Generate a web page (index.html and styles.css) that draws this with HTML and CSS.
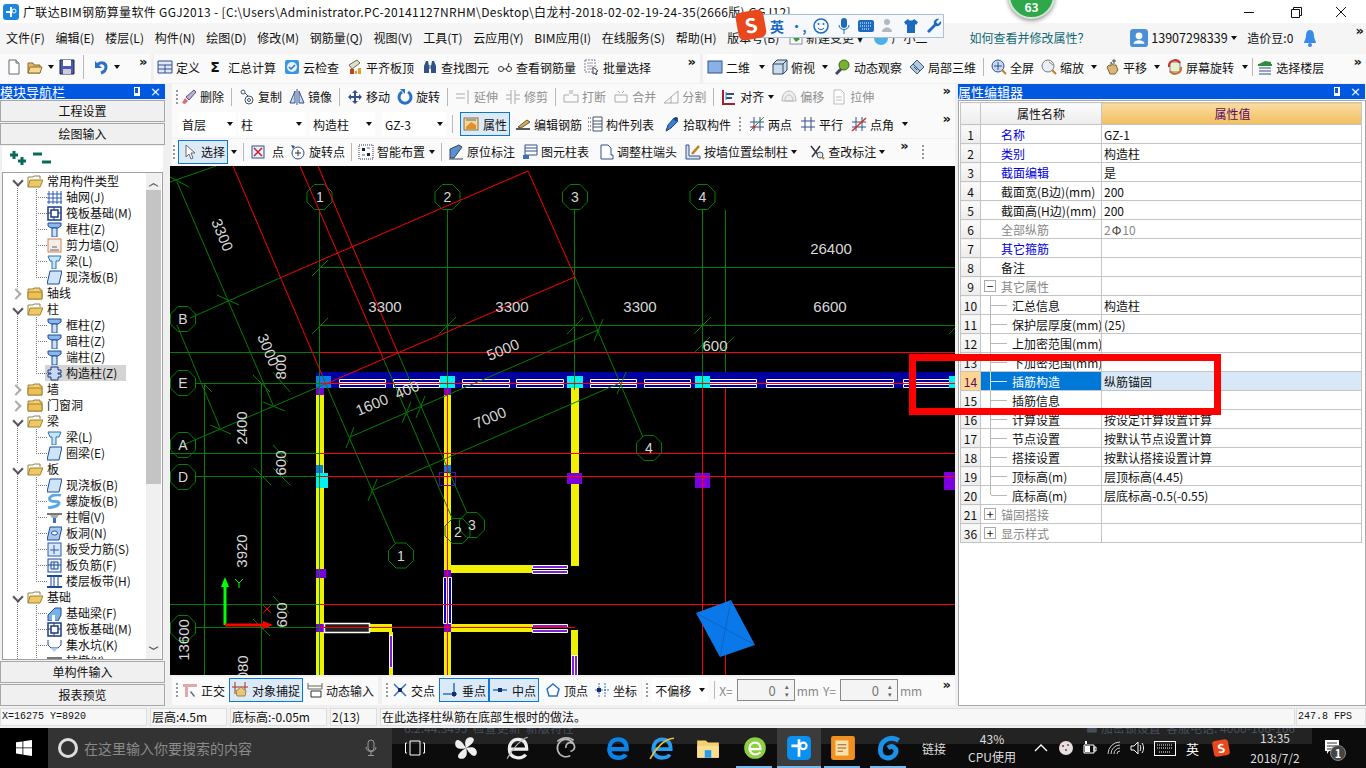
FILE: index.html
```html
<!DOCTYPE html>
<html lang="zh-CN">
<head>
<meta charset="utf-8">
<title>广联达BIM钢筋算量软件 GGJ2013</title>
<link rel="stylesheet" href="styles.css">
</head>
<body>
<svg class="sprite" aria-hidden="true">
<symbol id="new" viewBox="0 0 16 16"><path d="M3 1h7l3 3v11H3z" fill="#fff" stroke="#667"/><path d="M10 1v3h3" fill="#ddd" stroke="#667"/></symbol>
<symbol id="open" viewBox="0 0 16 16"><path d="M1 4h5l1 2h6v8H1z" fill="#e8b860" stroke="#8a6a30"/><path d="M3 8h12l-2 6H1z" fill="#f6d890" stroke="#8a6a30"/></symbol>
<symbol id="save" viewBox="0 0 16 16"><path d="M1 1h14v14H1z" fill="#4a5ab0" stroke="#223"/><path d="M4 1h8v6H4z" fill="#fff"/><path d="M4 10h8v5H4z" fill="#ccd"/></symbol>
<symbol id="undo" viewBox="0 0 16 16"><path d="M4 6c4-4 9-2 9 2 0 3-2 5-5 6" fill="none" stroke="#2a70c8" stroke-width="3"/><path d="M2 2v7h7z" fill="#2a70c8"/></symbol>
<symbol id="table" viewBox="0 0 16 16"><path d="M1 2h14v12H1z" fill="#dfe8f4" stroke="#34508a"/><path d="M1 6h14M1 10h14M8 6v8" stroke="#34508a" fill="none"/></symbol>
<symbol id="cloud" viewBox="0 0 16 16"><rect x="1" y="1" width="14" height="14" rx="2" fill="#3a96e0"/><circle cx="8" cy="8" r="5" fill="#e6f2fc"/><path d="M5 8l2 2 4-4" stroke="#2a70c8" stroke-width="1.5" fill="none"/></symbol>
<symbol id="align" viewBox="0 0 16 16"><path d="M2 6l8-5 3 3-8 6z" fill="#e0e0d0" stroke="#6a6a50"/><path d="M3 10h4v5H3z" fill="#c04020"/><path d="M8 12h2v3H8zM11 9h3v6h-3z" fill="#e0a030"/></symbol>
<symbol id="bino" viewBox="0 0 16 16"><path d="M2 7l2-5h2l1 5v7H2zM9 7l1-5h2l2 5v7H9z" fill="#34508a"/><path d="M7 6h2v4H7z" fill="#8aa"/></symbol>
<symbol id="glasses" viewBox="0 0 16 16"><circle cx="4" cy="10" r="2.5" fill="none" stroke="#333"/><circle cx="12" cy="10" r="2.5" fill="none" stroke="#333"/><path d="M6 10h3.500M11 8l1-4" stroke="#333" fill="none"/></symbol>
<symbol id="batch" viewBox="0 0 16 16"><path d="M1 1h10v12H1z" fill="#fff" stroke="#778" stroke-dasharray="2 1"/><path d="M3 4h6M3 7h6M3 10h6" stroke="#89a"/><path d="M9 8l5 4-2 1 1 2-1 1-1-2-2 1z" fill="#fff" stroke="#445"/></symbol>
<symbol id="box" viewBox="0 0 16 16"><rect x="1" y="2" width="14" height="12" fill="#8ab0e8" stroke="#34508a"/></symbol>
<symbol id="cube" viewBox="0 0 16 16"><path d="M1 5l4-4h10v10l-4 4H1z" fill="#c8dcf0" stroke="#345"/><path d="M1 5h10v10M11 5l4-4" fill="none" stroke="#345"/></symbol>
<symbol id="orbit" viewBox="0 0 16 16"><circle cx="9" cy="6" r="5" fill="#7ab030" stroke="#3a6a10"/><path d="M1 15l5-5" stroke="#446" stroke-width="3"/></symbol>
<symbol id="local" viewBox="0 0 16 16"><path d="M8 1l7 7-7 7-7-7z" fill="#b0c8e8" stroke="#456"/><path d="M4 5l7 7M8 1l3 3M5 8l3 3" stroke="#456" fill="none"/></symbol>
<symbol id="full" viewBox="0 0 16 16"><circle cx="7" cy="7" r="6" fill="#c8d8f0" stroke="#34508a"/><path d="M7 3v8M3 7h8" stroke="#34508a"/><path d="M11 11l4 4" stroke="#c08020" stroke-width="2"/></symbol>
<symbol id="zoom" viewBox="0 0 16 16"><circle cx="7" cy="7" r="6" fill="#e8eef8" stroke="#778"/><path d="M8 3l4 3" stroke="#c08020"/><path d="M11 11l4 4" stroke="#c08020" stroke-width="2"/></symbol>
<symbol id="pan" viewBox="0 0 16 16"><path d="M3 8l2-2 2 1V3l2 3 3 0 2 5-3 4H6z" fill="#d8b878" stroke="#806030"/><path d="M10 0v5M8 2h4" stroke="#446"/></symbol>
<symbol id="rotscr" viewBox="0 0 16 16"><rect x="3" y="3" width="10" height="10" fill="#e8f0d0" stroke="#789"/><path d="M2 8a6 6 0 0 1 11-4" fill="none" stroke="#d03020" stroke-width="2"/><path d="M14 8a6 6 0 0 1-11 4" fill="none" stroke="#d07020" stroke-width="2"/></symbol>
<symbol id="layers" viewBox="0 0 16 16"><path d="M2 5l6-3 6 1v2z" fill="#2a9040"/><path d="M2 9h12M2 12h12M2 15h12" stroke="#34508a" fill="none"/><path d="M1 6h14" stroke="#2a9040" stroke-width="2"/></symbol>
<symbol id="erase" viewBox="0 0 16 16"><path d="M1 14l3-5 3 3-3 3z" fill="#d07070"/><path d="M5 8l8-7 2 2-7 8z" fill="#c8a8e0" stroke="#556"/></symbol>
<symbol id="copy" viewBox="0 0 16 16"><circle cx="4" cy="3" r="2" fill="none" stroke="#456"/><circle cx="10" cy="11" r="4" fill="none" stroke="#456"/><circle cx="10" cy="11" r="1.500" fill="none" stroke="#456"/><path d="M6 4l3 3" stroke="#456"/></symbol>
<symbol id="mirror" viewBox="0 0 16 16"><path d="M6 2L1 14h5zM10 2l5 12h-5z" fill="#c8dcf0" stroke="#34508a"/><path d="M8 0v16" stroke="#34508a"/></symbol>
<symbol id="move" viewBox="0 0 16 16"><path d="M8 1l3 3H9v3h3V5l3 3-3 3V9H9v3h2l-3 3-3-3h2V9H4v2L1 8l3-3v2h3V4H5z" fill="#34508a"/></symbol>
<symbol id="rot" viewBox="0 0 16 16"><path d="M5 3a6 6 0 1 0 6 0" fill="none" stroke="#2a70c8" stroke-width="3"/><path d="M3 0h5v5z" fill="#2a70c8"/></symbol>
<symbol id="ext" viewBox="0 0 16 16"><path d="M1 5h9M1 9h9M13 1v14" stroke="#aaa" fill="none"/></symbol>
<symbol id="trim" viewBox="0 0 16 16"><path d="M1 6h5M10 6h5M1 10h5M10 10h5M6 1v14M10 1v14" stroke="#aaa" fill="none"/></symbol>
<symbol id="brk" viewBox="0 0 16 16"><path d="M1 6h5M1 13h14M1 13V6M15 13V6M10 6h5M7 1v4M9 1v4" stroke="#aaa" fill="none"/></symbol>
<symbol id="merge" viewBox="0 0 16 16"><path d="M2 6h12M2 13h12M2 13V6M14 13V6M5 2l2 2M11 2L9 4" stroke="#aaa" fill="none"/></symbol>
<symbol id="split" viewBox="0 0 16 16"><path d="M1 14l14-12v12zM8 14V8" stroke="#aaa" fill="none"/></symbol>
<symbol id="alignl" viewBox="0 0 16 16"><path d="M2 1v14h12" stroke="#a02030" fill="none" stroke-width="2"/><path d="M5 5h8M5 9h6" stroke="#34508a" stroke-width="2"/><path d="M5 3v8" stroke="#2a90c0"/></symbol>
<symbol id="offs" viewBox="0 0 16 16"><path d="M1 12c0-6 3-10 7-10s7 4 7 10zM4 12c0-4 2-6 4-6s4 2 4 6z" fill="#eee" stroke="#bbb"/></symbol>
<symbol id="str" viewBox="0 0 16 16"><path d="M3 1h7l3 3v11H3z" fill="#fff" stroke="#bbb"/><path d="M5 8h6M5 11h6" stroke="#bbb"/></symbol>
<symbol id="prop" viewBox="0 0 16 16"><rect x="1" y="2" width="14" height="12" fill="#f8d898" stroke="#8a7040"/><path d="M3 11l5-5 5 3v4H3z" fill="#e09030"/><path d="M3 4h10" stroke="#3a70b0"/></symbol>
<symbol id="edit" viewBox="0 0 16 16"><path d="M1 13h14" stroke="#222" stroke-width="1.500"/><path d="M3 11l9-7 3 2-9 6z" fill="#e0b040" stroke="#555"/></symbol>
<symbol id="list" viewBox="0 0 16 16"><path d="M1 2h3M1 6h3M1 10h3M1 14h3" stroke="#334" stroke-dasharray="1 1" fill="none"/><path d="M6 1h9v14H6zM6 5h9M6 8h9M6 11h9" fill="#fff" stroke="#456"/></symbol>
<symbol id="pick" viewBox="0 0 16 16"><path d="M2 15l2-6 6-7 4 3-7 7z" fill="#3a80d0" stroke="#1a4080"/><circle cx="12" cy="3" r="2" fill="#1a4080"/></symbol>
<symbol id="twop" viewBox="0 0 16 16"><path d="M5 1v14M11 1v14M1 6h14M1 11h14" stroke="#34508a" fill="none"/><path d="M1 15L15 1" stroke="#2a9040"/><circle cx="5" cy="11" r="1.500" fill="#d03020"/></symbol>
<symbol id="para" viewBox="0 0 16 16"><path d="M5 1v14M11 1v14M1 5h14M1 11h14" stroke="#34508a" fill="none"/></symbol>
<symbol id="pang" viewBox="0 0 16 16"><path d="M5 1v14M11 1v14M1 6h14M1 11h14" stroke="#34508a" fill="none"/><path d="M1 15L15 2" stroke="#d03020" stroke-width="1.500"/></symbol>
<symbol id="cursor" viewBox="0 0 16 16"><path d="M5 1v12l3-3 2 5 2-1-2-5h4z" fill="#fff" stroke="#667"/></symbol>
<symbol id="point" viewBox="0 0 16 16"><rect x="2" y="2" width="12" height="12" fill="#e8eef8" stroke="#34508a"/><path d="M4 4l8 8M12 4l-8 8" stroke="#c02030" stroke-width="1.500"/></symbol>
<symbol id="rotp" viewBox="0 0 16 16"><circle cx="8" cy="9" r="6" fill="none" stroke="#34508a"/><path d="M8 6v6M5 9h6" stroke="#333"/><path d="M1 1l4 1-2 3z" fill="#34508a"/></symbol>
<symbol id="smart" viewBox="0 0 16 16"><rect x="1" y="1" width="14" height="14" fill="#fff" stroke="#334" stroke-dasharray="1 1"/><path d="M4 4h3v3H4zM9 9h3v3H9z" fill="#223"/><path d="M9 4h3M4 11h3" stroke="#36c"/></symbol>
<symbol id="inpl" viewBox="0 0 16 16"><path d="M2 14V5l9-4 3 2-8 11z" fill="#5a90d0" stroke="#345"/><path d="M1 15h14" stroke="#345"/></symbol>
<symbol id="coltb" viewBox="0 0 16 16"><path d="M3 1h12v10H3z" fill="#fff" stroke="#34508a"/><path d="M3 4h12M3 7h12" stroke="#34508a"/><path d="M1 11h6v4H1z" fill="#3a70c0"/></symbol>
<symbol id="adj" viewBox="0 0 16 16"><path d="M3 1h7l3 3v7h2v4H3z" fill="#fff" stroke="#34508a"/></symbol>
<symbol id="wallp" viewBox="0 0 16 16"><path d="M1 15V1h3v11h11v3z" fill="#d8e4f4" stroke="#34508a"/><path d="M7 10l7-8" stroke="#c08020" stroke-width="2.500"/></symbol>
<symbol id="chk" viewBox="0 0 16 16"><path d="M2 2l8 10M11 2L3 13" stroke="#334" fill="none" stroke-width="1.500"/><circle cx="11" cy="11" r="3" fill="#e0e8f0" stroke="#456"/><path d="M13 13l2 2" stroke="#c08020" stroke-width="2"/></symbol>
<symbol id="ortho" viewBox="0 0 16 16"><path d="M1 2h14v3H6v10H3V5H1z" fill="#e0a8a8"/><path d="M9 9l4 5-1 1-4-5z" fill="#567"/></symbol>
<symbol id="snap" viewBox="0 0 16 16"><path d="M3 0v12M13 0v12" stroke="#a03020"/><path d="M0 5h16" stroke="#a03020"/><path d="M4 9l5-4 5 4-1 5H5z" fill="#e8c878" stroke="#a08040"/></symbol>
<symbol id="dyn" viewBox="0 0 16 16"><path d="M1 1v6h14V1M1 4h14" stroke="#666" fill="none"/><path d="M4 9h10v6H4z" fill="#fff" stroke="#333"/></symbol>
<symbol id="cross" viewBox="0 0 16 16"><path d="M2 2l12 12M14 2L2 14" stroke="#2a70c8" stroke-width="1.500"/><rect x="6" y="6" width="4" height="4" fill="#1a2a70"/></symbol>
<symbol id="perp" viewBox="0 0 16 16"><path d="M1 12h14M12 1v14" stroke="#2a70c8" stroke-width="1.500"/><rect x="10" y="10" width="4" height="4" fill="#1a2a70"/></symbol>
<symbol id="mid" viewBox="0 0 16 16"><path d="M1 8h14" stroke="#2a70c8" stroke-width="1.500"/><rect x="6" y="6" width="4" height="4" fill="#1a2a70"/></symbol>
<symbol id="vert" viewBox="0 0 16 16"><path d="M8 2l6 5-2 7H4L2 7z" fill="#fff" stroke="#2a70c8" stroke-width="1.500"/></symbol>
<symbol id="coord" viewBox="0 0 16 16"><path d="M5 1v14M11 1v14M1 8h14" stroke="#2a70c8" stroke-dasharray="2 1" fill="none"/><rect x="3" y="6" width="4" height="4" fill="#1a2a70"/></symbol>
<symbol id="tgrid" viewBox="0 0 15 15"><path d="M2 1v13M6 1v13M10 1v13M14 1v13M0 4h15M0 8h15M0 12h15" stroke="#2a5ab0" fill="none"/></symbol>
<symbol id="traft" viewBox="0 0 15 15"><path d="M1 1h13v13H1zM4 4h7v7H4z" fill="#fff" stroke="#1a3a80" stroke-width="1.500"/><path d="M1 7h3M11 7h3M7 1v3M7 11v3" stroke="#1a3a80"/></symbol>
<symbol id="tcol" viewBox="0 0 15 15"><path d="M1 1h13v3l-3 2H4L1 4z" fill="#8ab8e8" stroke="#1a4a9a"/><path d="M5 6h5v9H5z" fill="#c8e0f8" stroke="#1a4a9a"/></symbol>
<symbol id="twall" viewBox="0 0 15 15"><rect x="1" y="1" width="13" height="13" fill="#f4eeea" stroke="#d08050"/><path d="M3 11h9v2H3zM5 8h5v2H5z" fill="#aaa"/></symbol>
<symbol id="tbeam" viewBox="0 0 15 15"><path d="M1 2h13l-2 5H9v8H5V7H3z" fill="#c8e4f8" stroke="#2a70b8"/></symbol>
<symbol id="tslab" viewBox="0 0 15 15"><path d="M3 1h12l-3 13H0z" fill="#d0e4f8" stroke="#1a4a9a"/></symbol>
<symbol id="tcon" viewBox="0 0 15 15"><path d="M4 1h7v3h3v3h-3v1h3v3h-3v3H4v-3H1V8h3V7H1V4h3z" fill="#c8d8f0" stroke="#1a3a80"/></symbol>
<symbol id="tspi" viewBox="0 0 15 15"><path d="M14 1C6 0 1 3 3 6s9 0 9 3-6 4-11 5" fill="none" stroke="#5aa8e8" stroke-width="3"/></symbol>
<symbol id="tcap" viewBox="0 0 15 15"><path d="M0 3h15v2H0z" fill="#777"/><path d="M3 5h9l-2 3H5z" fill="#aaa"/><path d="M6 8h3v5H6z" fill="#3a70c0"/></symbol>
<symbol id="thol" viewBox="0 0 15 15"><path d="M3 1h12l-3 13H0z" fill="#a8c8f0" stroke="#1a4a9a"/><ellipse cx="7.500" cy="7" rx="3" ry="2" fill="#fff" stroke="#1a4a9a"/></symbol>
<symbol id="tfor" viewBox="0 0 15 15"><rect x="1" y="1" width="13" height="13" fill="#d8e8f8" stroke="#2a5ab0"/><path d="M7 3v9M3 8h9" stroke="#2a5ab0"/></symbol>
<symbol id="tneg" viewBox="0 0 15 15"><rect x="1" y="1" width="13" height="13" fill="#e8f0fa" stroke="#1a4a9a"/><path d="M1 7h13M7 4v7M4 4h7v7H4z" fill="none" stroke="#1a4a9a"/></symbol>
<symbol id="tban" viewBox="0 0 15 15"><path d="M0 2h15M0 13h15" stroke="#1a4a9a" stroke-width="2"/><path d="M4 3v9M7 3v9M11 3v9" stroke="#1a4a9a"/></symbol>
<symbol id="tfnd" viewBox="0 0 15 15"><path d="M1 15V9l7-7h6v7l-3 6z" fill="#7ab0e8" stroke="#1a4a9a"/><path d="M5 15V9h3v6z" fill="#fff"/></symbol>
<symbol id="tpit" viewBox="0 0 15 15"><path d="M1 2v5l3 3h7l3-3V2" fill="none" stroke="#1a4a9a"/><path d="M4 10l3 4 4-4z" fill="#a8c8f0"/></symbol>
<symbol id="fold" viewBox="0 0 16 14"><path d="M1 3h5l1-1h6v2h2v9H1z" fill="#f4d070" stroke="#9a8040"/><path d="M1 6h14v7H1z" fill="#f0c050" stroke="#9a8040"/></symbol>
<symbol id="fopen" viewBox="0 0 16 14"><path d="M1 13V3h5l1-1h6v3" fill="#fff" stroke="#9a8040"/><path d="M3 6h13l-3 7H1z" fill="#f0c860" stroke="#9a8040"/></symbol>
<symbol id="win" viewBox="0 0 16 16"><path d="M0 2.300L6.500 1.400V7.500H0zM7.300 1.300L16 0V7.500H7.300zM0 8.300H6.500V14.500L0 13.600zM7.300 8.300H16V16L7.300 14.700z" fill="#fff"/></symbol>
</svg>

<div class="app">
  <header class="titlebar">
    <svg class="app-icon" viewBox="0 0 16 16"><rect width="16" height="16" rx="3" fill="#1a86e0"/><path d="M8 3v10M3 8h4" stroke="#fff" stroke-width="2" fill="none"/><circle cx="11" cy="7" r="2" fill="none" stroke="#fff"/></svg>
    <span class="title-text">广联达BIM钢筋算量软件 GGJ2013 - [C:\Users\Administrator.PC-20141127NRHM\Desktop\白龙村-2018-02-02-19-24-35(2666版).GGJ12]</span>
    <div class="win-controls">
      <svg viewBox="0 0 46 22"><path d="M18 11.500h10" stroke="#111"/></svg>
      <svg viewBox="0 0 46 22"><path d="M19.500 8.500h8v8h-8zM21.500 8.500v-2h8v8h-2" fill="none" stroke="#111"/></svg>
      <svg viewBox="0 0 46 22"><path d="M18 6l10 10M28 6L18 16" stroke="#111"/></svg>
    </div>
  </header>

  <nav class="menubar">
    <span>文件(F)</span><span>编辑(E)</span><span>楼层(L)</span><span>构件(N)</span><span>绘图(D)</span><span>修改(M)</span><span>钢筋量(Q)</span><span>视图(V)</span><span>工具(T)</span><span>云应用(Y)</span><span>BIM应用(I)</span><span>在线服务(S)</span><span>帮助(H)</span><span>版本号(B)</span>
    <span class="menu-extra"><svg class="ic" viewBox="0 0 16 16"><rect x="2" y="2" width="12" height="12" fill="#fff" stroke="#88a"/><path d="M8 5l4 4-4 3-3-4z" fill="#3a9a30"/></svg>新建变更 ▾</span>
    <span class="menu-extra2"><svg class="ic" viewBox="0 0 16 16"><circle cx="8" cy="8" r="7" fill="#4ab0e8"/></svg>广小二</span>
    <span class="help-link">如何查看并修改属性？</span>
    <span class="account"><svg class="ic-lg" viewBox="0 0 16 16"><rect width="16" height="16" rx="3" fill="#4a90d8"/><circle cx="8" cy="6" r="3" fill="#fff"/><path d="M3 13c1-4 9-4 10 0z" fill="#fff"/></svg>13907298339<i class="caret"></i></span>
    <span class="beans">造价豆:0</span>
    <svg class="bell" viewBox="0 0 14 18"><path d="M7 1c3 0 4 3 4 6 0 3 2 5 2 7H1c0-2 2-4 2-7 0-3 1-6 4-6z" fill="#3a8ae8"/><circle cx="7" cy="16" r="2" fill="#3a8ae8"/></svg>
    <span class="chev menu-chev">»</span>
  </nav>

  <div class="toolbar top-tools">
    <div class="tgroup file-tools">
      <svg class="ic"><use href="#new"/></svg><svg class="ic"><use href="#open"/></svg><i class="caret"></i><svg class="ic"><use href="#save"/></svg><b class="sep"></b><svg class="ic"><use href="#undo"/></svg><i class="caret"></i><span class="chev">»</span>
    </div>
    <div class="tgroup main-tools">
      <span class="ti"><svg class="ic"><use href="#table"/></svg>定义</span>
      <span class="ti"><b class="sigma">Σ</b>汇总计算</span>
      <span class="ti"><svg class="ic"><use href="#cloud"/></svg>云检查</span>
      <span class="ti"><svg class="ic"><use href="#align"/></svg>平齐板顶</span>
      <span class="ti"><svg class="ic"><use href="#bino"/></svg>查找图元</span>
      <span class="ti"><svg class="ic"><use href="#glasses"/></svg>查看钢筋量</span>
      <span class="ti"><svg class="ic"><use href="#batch"/></svg>批量选择</span>
      <span class="chev push">»</span>
    </div>
    <div class="tgroup view-tools">
      <span class="ti ti-white"><svg class="ic"><use href="#box"/></svg>二维</span><i class="caret caret-b"></i>
      <span class="ti"><svg class="ic"><use href="#cube"/></svg>俯视</span><i class="caret"></i>
      <span class="ti"><svg class="ic"><use href="#orbit"/></svg>动态观察</span>
      <span class="ti"><svg class="ic"><use href="#local"/></svg>局部三维</span>
      <b class="sep"></b>
      <span class="ti"><svg class="ic"><use href="#full"/></svg>全屏</span>
      <span class="ti"><svg class="ic"><use href="#zoom"/></svg>缩放</span><i class="caret"></i>
      <span class="ti"><svg class="ic"><use href="#pan"/></svg>平移</span><i class="caret"></i>
      <span class="ti"><svg class="ic"><use href="#rotscr"/></svg>屏幕旋转</span><i class="caret caret-n"></i>
      <b class="sep sep-tight"></b>
      <span class="ti"><svg class="ic"><use href="#layers"/></svg>选择楼层</span>
      <span class="chev push">»</span>
    </div>
  </div>

  <main class="workspace">
    <aside class="nav-panel">
      <div class="panel-title"><span>模块导航栏</span><span class="pin-close"><i class="pin"></i><i class="close">×</i></span></div>
      <div class="nav-btn">工程设置</div>
      <div class="nav-btn">绘图输入</div>
      <div class="tree-head"><svg viewBox="0 0 44 18"><path d="M5 1v8M1 5h8M13 7v8M9 11h8M24 4h9M33 12h9" stroke="#0a6a5a" stroke-width="3" fill="none"/></svg></div>
      <div class="tree-box">
        <ul class="tree">
          <li class="root open"><svg class="fd"><use href="#fopen"/></svg>常用构件类型</li>
          <li class="leaf"><svg class="ti-ic"><use href="#tgrid"/></svg>轴网(J)</li>
          <li class="leaf"><svg class="ti-ic"><use href="#traft"/></svg>筏板基础(M)</li>
          <li class="leaf"><svg class="ti-ic"><use href="#tcol"/></svg>框柱(Z)</li>
          <li class="leaf"><svg class="ti-ic"><use href="#twall"/></svg>剪力墙(Q)</li>
          <li class="leaf"><svg class="ti-ic"><use href="#tbeam"/></svg>梁(L)</li>
          <li class="leaf last"><svg class="ti-ic"><use href="#tslab"/></svg>现浇板(B)</li>
          <li class="root shut"><svg class="fd"><use href="#fold"/></svg>轴线</li>
          <li class="root open"><svg class="fd"><use href="#fopen"/></svg>柱</li>
          <li class="leaf"><svg class="ti-ic"><use href="#tcol"/></svg>框柱(Z)</li>
          <li class="leaf"><svg class="ti-ic"><use href="#tcol"/></svg>暗柱(Z)</li>
          <li class="leaf"><svg class="ti-ic"><use href="#tcol"/></svg>端柱(Z)</li>
          <li class="leaf last sel"><svg class="ti-ic"><use href="#tcon"/></svg>构造柱(Z)</li>
          <li class="root shut"><svg class="fd"><use href="#fold"/></svg>墙</li>
          <li class="root shut"><svg class="fd"><use href="#fold"/></svg>门窗洞</li>
          <li class="root open"><svg class="fd"><use href="#fopen"/></svg>梁</li>
          <li class="leaf"><svg class="ti-ic"><use href="#tbeam"/></svg>梁(L)</li>
          <li class="leaf last"><svg class="ti-ic"><use href="#tslab"/></svg>圈梁(E)</li>
          <li class="root open"><svg class="fd"><use href="#fopen"/></svg>板</li>
          <li class="leaf"><svg class="ti-ic"><use href="#tslab"/></svg>现浇板(B)</li>
          <li class="leaf"><svg class="ti-ic"><use href="#tspi"/></svg>螺旋板(B)</li>
          <li class="leaf"><svg class="ti-ic"><use href="#tcap"/></svg>柱帽(V)</li>
          <li class="leaf"><svg class="ti-ic"><use href="#thol"/></svg>板洞(N)</li>
          <li class="leaf"><svg class="ti-ic"><use href="#tfor"/></svg>板受力筋(S)</li>
          <li class="leaf"><svg class="ti-ic"><use href="#tneg"/></svg>板负筋(F)</li>
          <li class="leaf last"><svg class="ti-ic"><use href="#tban"/></svg>楼层板带(H)</li>
          <li class="root open"><svg class="fd"><use href="#fopen"/></svg>基础</li>
          <li class="leaf"><svg class="ti-ic"><use href="#tfnd"/></svg>基础梁(F)</li>
          <li class="leaf"><svg class="ti-ic"><use href="#traft"/></svg>筏板基础(M)</li>
          <li class="leaf"><svg class="ti-ic"><use href="#tpit"/></svg>集水坑(K)</li>
          <li class="leaf"><svg class="ti-ic"><use href="#tcap"/></svg>柱墩(Y)</li>
        </ul>
        <div class="scroll"><span class="sc-up">︿</span><span class="sc-thumb"></span><span class="sc-track"></span><span class="sc-dn">﹀</span></div>
      </div>
      <div class="nav-btn">单构件输入</div>
      <div class="nav-btn">报表预览</div>
    </aside>

    <section class="center">
      <div class="toolbar draw-row row-edit">
        <i class="grip"></i>
        <span class="ti"><svg class="ic"><use href="#erase"/></svg>删除</span><b class="sep"></b>
        <span class="ti"><svg class="ic"><use href="#copy"/></svg>复制</span>
        <span class="ti"><svg class="ic"><use href="#mirror"/></svg>镜像</span><b class="sep"></b>
        <span class="ti"><svg class="ic"><use href="#move"/></svg>移动</span>
        <span class="ti"><svg class="ic"><use href="#rot"/></svg>旋转</span><b class="sep"></b>
        <span class="ti off"><svg class="ic"><use href="#ext"/></svg>延伸</span>
        <span class="ti off"><svg class="ic"><use href="#trim"/></svg>修剪</span><b class="sep"></b>
        <span class="ti off"><svg class="ic"><use href="#brk"/></svg>打断</span>
        <span class="ti off"><svg class="ic"><use href="#merge"/></svg>合并</span>
        <span class="ti off"><svg class="ic"><use href="#split"/></svg>分割</span><b class="sep"></b>
        <span class="ti"><svg class="ic"><use href="#alignl"/></svg>对齐<i class="caret caret-n"></i></span>
        <span class="ti off"><svg class="ic"><use href="#offs"/></svg>偏移</span>
        <span class="ti off"><svg class="ic"><use href="#str"/></svg>拉伸</span>
        <span class="chev push">»</span>
      </div>
      <div class="toolbar draw-row row-select">
        <span class="combo c-floor">首层<i class="caret"></i></span>
        <span class="combo c-type">柱<i class="caret"></i></span>
        <span class="combo c-sub">构造柱<i class="caret"></i></span>
        <span class="combo c-name">GZ-3<i class="caret"></i></span>
        <b class="sep"></b>
        <span class="ti active"><svg class="ic"><use href="#prop"/></svg>属性</span>
        <span class="ti"><svg class="ic"><use href="#edit"/></svg>编辑钢筋</span>
        <span class="ti"><svg class="ic"><use href="#list"/></svg>构件列表</span>
        <span class="ti ml5"><svg class="ic"><use href="#pick"/></svg>拾取构件</span>
        <i class="grip"></i>
        <span class="ti"><svg class="ic"><use href="#twop"/></svg>两点</span>
        <span class="ti ml3"><svg class="ic"><use href="#para"/></svg>平行</span>
        <span class="ti ml3"><svg class="ic"><use href="#pang"/></svg>点角</span><i class="caret caret-w"></i>
        <span class="chev push">»</span>
      </div>
      <div class="toolbar draw-row row-draw">
        <i class="grip"></i>
        <span class="ti active"><svg class="ic"><use href="#cursor"/></svg>选择</span><i class="caret caret-n"></i><b class="sep"></b>
        <span class="ti ti-point"><svg class="ic"><use href="#point"/></svg>点</span>
        <span class="ti"><svg class="ic"><use href="#rotp"/></svg>旋转点</span><b class="sep"></b>
        <span class="ti"><svg class="ic"><use href="#smart"/></svg>智能布置<i class="caret caret-n"></i></span><b class="sep"></b>
        <span class="ti"><svg class="ic"><use href="#inpl"/></svg>原位标注</span>
        <span class="ti ml2"><svg class="ic"><use href="#coltb"/></svg>图元柱表</span>
        <span class="ti ml4"><svg class="ic"><use href="#adj"/></svg>调整柱端头</span>
        <span class="ti ml3"><svg class="ic"><use href="#wallp"/></svg>按墙位置绘制柱<i class="caret"></i></span>
        <span class="ti ml7"><svg class="ic"><use href="#chk"/></svg>查改标注<i class="caret"></i></span>
        <span class="chev">»</span>
        <i class="grip"></i>
      </div>

      <svg class="canvas" viewBox="170 166 785 509">
        <defs><path id="oc" d="M5-12.500L12.500-5V5L5 12.500H-5L-12.500 5V-5L-5-12.500z"/></defs>
        <rect x="170" y="166" width="785" height="509" fill="#000"/>
        <!-- walls -->
        <path class="wall" d="M316 390h8v285h-8zM444 390h7v285h-7zM571 388h8v178h-8zM451 565h81v8h-81zM451 624h81v8h-81zM324 624h68v8h-68zM389 632h4v43h-4zM571 630h7v45h-7z"/>
        <rect x="316" y="372" width="639" height="16" fill="#0000a0"/>
        <path class="rebar" d="M339.500 379.500h46v3h-46zM339.500 384.500h46v3h-46zM393.500 379.500h46v3h-46zM393.500 384.500h46v3h-46zM462.500 379.500h47v3h-47zM462.500 384.500h47v3h-47zM516.500 379.500h47v3h-47zM516.500 384.500h47v3h-47zM590.500 379.500h46v3h-46zM590.500 384.500h46v3h-46zM644.500 379.500h46v3h-46zM644.500 384.500h46v3h-46zM709.500 379.500h47v3h-47zM709.500 384.500h47v3h-47zM766.500 379.500h127v3h-127zM766.500 384.500h127v3h-127zM903.500 379.500h46v3h-46zM903.500 384.500h46v3h-46z"/>
        <path fill="#00f0f0" d="M440 376h15v12h-15zM567 376h16v12h-16zM695 376h15v12h-15zM949 376h6v12h-6zM316 473h12v15h-12z"/>
        <path fill="#0a7cf0" d="M316 376h15v12h-15zM316 465h7v8h-7zM444 465h7v8h-7z"/>
        <path fill="#7a00e0" d="M316 388h8v7h-8zM444 388h7v7h-7zM316 569h10v9h-10zM444 570h7v7h-7zM316 624h8v8h-8zM444 624h7v8h-7zM567 473h15v11h-15zM695 473h15v15h-15zM944 472h11v18h-11z"/>
        <rect x="439.500" y="472.500" width="16" height="13" fill="none" stroke="#5a00c0"/>
        <path d="M324.500 623.500h45v9h-45z" fill="#222" stroke="#fff" stroke-width="1.500"/>
        <path d="M443.500 577.500h3v46h-3zM448.500 577.500h3v46h-3z" fill="#0000d0" stroke="#fff"/>
        <path d="M532.500 565.500h35v3h-35zM532.500 570.500h35v3h-35zM532.500 624.500h35v3h-35zM532.500 629.500h35v3h-35zM389.500 635.500h3v32h-3zM571.500 655.500h3v20h-3zM574.500 655.500h3v20h-3z" fill="#8020d0" stroke="#fff"/>
        <!-- green lines -->
        <path class="gl" d="M319.500 209V675M447.500 210V390M574.500 210V390M702.500 210V390M725.500 210V372M204.500 383V675M261.500 383V675M320 267.500H955M320 325.500H955M170 352.500H320M195 383.500H320M170 453.500H320M195 476.500H320M170 604.500H320M195 627.500H320"/>
        <path class="gl" d="M183 445L323 385M190 318L282 277M350 437L598 330M373 490L620 383M170 182L216 166M177 182L273 405M177 325L220 428M322 375L395 543M383 358L452 518M398 353L467 513M575 277L643 437"/>
        <path class="gl" d="M312 276L328 260M312 334L328 318M439 334L456 317M567 334L583 318M694 334L711 317M694 353L710 337M718 353L734 337M949 334L955 328M253 375L270 392M273 372L290 392M203 383L212 392M254 468L271 485M273 468L290 485M273 596L289 613M253 619L270 636M273 445L288 462M217 295L239 305M263 402L285 411M210 425L231 434M346 448L354 427M402 423L411 402M416 418L425 396M170 177L189 187M594 341L603 319M617 394L626 372M368 501L377 479"/>
        <g class="oct">
          <use href="#oc" x="319.500" y="197"/><use href="#oc" x="447.500" y="197"/><use href="#oc" x="575" y="197"/><use href="#oc" x="702.500" y="197"/>
          <use href="#oc" x="183" y="319"/><use href="#oc" x="183" y="383"/><use href="#oc" x="183" y="445"/><use href="#oc" x="183" y="477"/><use href="#oc" x="183" y="628"/>
          <use href="#oc" x="649" y="448"/><use href="#oc" x="401" y="555.500"/><use href="#oc" x="457.500" y="531"/><use href="#oc" x="472" y="525"/>
        </g>
        <!-- red lines -->
        <path class="rl" d="M320 352.500H955M320 383.500H955M320 453.500H955M320 476.500H955M320 604.500H955M320 627.500H575M447.500 390V675M702.500 388V675M725.500 388V675"/>
        <path class="rl" d="M233 166L322 375M300 166L383 358M318 166L398 353M282 277L528 171M323 385L575 277M528 171L575 277"/>
        <!-- axes -->
        <path d="M225 625V586" stroke="#00ff00" stroke-width="3"/><path d="M225 577l-4 10h8z" fill="#00ff00"/>
        <path d="M225 625H265" stroke="#ff0000" stroke-width="3"/><path d="M273 625l-10-4v8z" fill="#ff0000"/>
        <path d="M235 579l4 4 4-4M239 583v5" stroke="#00ff00" fill="none"/>
        <path d="M263 605l8 8M271 605l-8 8" stroke="#ff0000" fill="none"/>
        <!-- blue square -->
        <path d="M731 600L755 645 720 657 696 613z" fill="#0a78e8"/>
        <path d="M731 600L720 657M696 613L755 645" stroke="#0a50a0" stroke-width=".5" fill="none"/>
        <!-- labels -->
        <g class="lab">
          <text x="320" y="202" class="cn">1</text><text x="447.500" y="202" class="cn">2</text><text x="575" y="202" class="cn">3</text><text x="702.500" y="202" class="cn">4</text>
          <text x="183" y="324" class="cn">B</text><text x="183" y="388" class="cn">E</text><text x="183" y="450" class="cn">A</text><text x="183" y="482" class="cn">D</text>
          <text x="649" y="453" class="cn">4</text><text x="401" y="561" class="cn">1</text><text x="458" y="537" class="cn">2</text><text x="472" y="530" class="cn">3</text>
          <text x="385" y="312">3300</text><text x="512" y="312">3300</text><text x="640" y="312">3300</text><text x="830" y="312">6600</text><text x="831" y="254">26400</text>
          <text x="715" y="351">600</text>
          <text transform="translate(222 235) rotate(67)" y="5">3300</text>
          <text transform="translate(268 350) rotate(67)" y="5">3000</text>
          <text transform="translate(503 350) rotate(-23)" y="5">5000</text>
          <text transform="translate(372 405) rotate(-23)" y="5">1600</text>
          <text transform="translate(407 390) rotate(-23)" y="5">400</text>
          <text transform="translate(490 418) rotate(-23)" y="5">7000</text>
          <text transform="translate(281 367) rotate(-90)" y="5">800</text>
          <text transform="translate(242 428) rotate(-90)" y="5">2400</text>
          <text transform="translate(281 463) rotate(-90)" y="5">600</text>
          <text transform="translate(242 551) rotate(-90)" y="5">3920</text>
          <text transform="translate(282 615) rotate(-90)" y="5">600</text>
          <text transform="translate(184 640) rotate(-90)" y="5">13600</text>
          <text transform="translate(243 672) rotate(-90)" y="5">3080</text>
        </g>
      </svg>

      <div class="toolbar draw-row row-snap">
        <i class="grip"></i>
        <span class="ti"><svg class="ic"><use href="#ortho"/></svg>正交</span>
        <span class="ti active"><svg class="ic"><use href="#snap"/></svg>对象捕捉</span>
        <span class="ti"><svg class="ic"><use href="#dyn"/></svg>动态输入</span>
        <b class="tgap"></b><i class="grip"></i>
        <span class="ti"><svg class="ic"><use href="#cross"/></svg>交点</span>
        <span class="ti active"><svg class="ic"><use href="#perp"/></svg>垂点</span>
        <span class="ti active ti-join"><svg class="ic"><use href="#mid"/></svg>中点</span>
        <span class="ti ml2"><svg class="ic"><use href="#vert"/></svg>顶点</span>
        <span class="ti ml2"><svg class="ic"><use href="#coord"/></svg>坐标</span>
        <b class="tgap tgap-sm"></b><i class="grip"></i>
        <span class="combo c-off">不偏移<i class="caret"></i></span><b class="sep"></b>
        <span class="mute">X=</span><span class="spin">0<i class="spin-arrows">▴<br>▾</i></span><span class="mute mm">mm</span>
        <span class="mute">Y=</span><span class="spin">0<i class="spin-arrows">▴<br>▾</i></span><span class="mute mm">mm</span>
        <span class="chev push">»</span>
      </div>
    </section>

    <aside class="prop-panel">
      <div class="panel-title"><span>属性编辑器</span><span class="pin-close"><i class="pin"></i><i class="close">×</i></span></div>
      <div class="prop-body">
        <table class="grid">
          <thead><tr><th class="n"></th><th class="k">属性名称</th><th class="v">属性值</th></tr></thead>
          <tbody>
            <tr><td class="n">1</td><td class="k link">名称</td><td class="v">GZ-1</td></tr>
            <tr><td class="n">2</td><td class="k link">类别</td><td class="v">构造柱</td></tr>
            <tr><td class="n">3</td><td class="k link">截面编辑</td><td class="v">是</td></tr>
            <tr><td class="n">4</td><td class="k">截面宽(B边)(mm)</td><td class="v">200</td></tr>
            <tr><td class="n">5</td><td class="k">截面高(H边)(mm)</td><td class="v">200</td></tr>
            <tr><td class="n">6</td><td class="k dim">全部纵筋</td><td class="v dim">2<b class="bar-sym">Φ</b>10</td></tr>
            <tr><td class="n">7</td><td class="k link">其它箍筋</td><td class="v"></td></tr>
            <tr><td class="n">8</td><td class="k">备注</td><td class="v"></td></tr>
            <tr><td class="n">9</td><td class="k dim grp"><i class="pm">−</i>其它属性</td><td class="v"></td></tr>
            <tr><td class="n">10</td><td class="k sub">汇总信息</td><td class="v">构造柱</td></tr>
            <tr><td class="n">11</td><td class="k sub">保护层厚度(mm)</td><td class="v">(25)</td></tr>
            <tr><td class="n">12</td><td class="k sub">上加密范围(mm)</td><td class="v"></td></tr>
            <tr><td class="n">13</td><td class="k sub">下加密范围(mm)</td><td class="v"></td></tr>
            <tr class="cur"><td class="n">14</td><td class="k sub">插筋构造</td><td class="v">纵筋锚固</td></tr>
            <tr><td class="n">15</td><td class="k sub">插筋信息</td><td class="v"></td></tr>
            <tr><td class="n">16</td><td class="k sub">计算设置</td><td class="v">按设定计算设置计算</td></tr>
            <tr><td class="n">17</td><td class="k sub">节点设置</td><td class="v">按默认节点设置计算</td></tr>
            <tr><td class="n">18</td><td class="k sub">搭接设置</td><td class="v">按默认搭接设置计算</td></tr>
            <tr><td class="n">19</td><td class="k sub">顶标高(m)</td><td class="v">层顶标高(4.45)</td></tr>
            <tr><td class="n">20</td><td class="k sub end">底标高(m)</td><td class="v">层底标高-0.5(-0.55)</td></tr>
            <tr><td class="n">21</td><td class="k dim grp"><i class="pm">+</i>锚固搭接</td><td class="v"></td></tr>
            <tr><td class="n">36</td><td class="k dim grp"><i class="pm">+</i>显示样式</td><td class="v"></td></tr>
          </tbody>
        </table>
      </div>
    </aside>
    <div class="callout"></div>
  </main>

  <footer class="statusbar">
    <span class="st st-xy mono">X=16275 Y=8920</span>
    <span class="st st-h">层高:4.5m</span>
    <span class="st st-b">底标高:-0.05m</span>
    <span class="st st-c">2(13)</span>
    <span class="st st-msg">在此选择柱纵筋在底部生根时的做法。</span>
    <span class="st st-fps mono">247.8 FPS</span>
  </footer>

  <div class="taskbar">
    <div class="ghost"><span class="g1">6.2.44.3495 &nbsp;检查更新 &nbsp;新版特性</span><span class="g2">■ 加密锁设置 &nbsp;客服电话: 4000-166-166</span></div>
    <span class="start"><svg class="win-logo"><use href="#win"/></svg></span>
    <div class="search">
      <i class="cortana"></i><span>在这里输入你要搜索的内容</span>
      <svg class="mic" viewBox="0 0 12 18"><rect x="3" y="1" width="6" height="11" rx="3" fill="none" stroke="#999"/><path d="M1 8c0 6 10 6 10 0M6 13v3M3 16.500h6" stroke="#999" fill="none"/></svg>
    </div>
    <div class="tasks">
      <span class="tk"><svg viewBox="0 0 22 20"><path d="M6 3h10v14H6zM3 5H1.500v10H3M19 5h1.500v10H19" stroke="#fff" fill="none"/></svg></span>
      <span class="tk"><svg viewBox="0 0 24 24"><path d="M12 12C6 2 2 4 2 8s4 6 10 4zM12 12c10-6 8-10 4-10s-6 4-4 10zM12 12c6 10 10 8 10 4s-4-6-10-4zM12 12C2 18 4 22 8 22s6-4 4-10z" fill="#eee"/></svg></span>
      <span class="tk"><svg viewBox="0 0 24 24"><path d="M5 13h15c0-6-3-9-8-9s-8 4-8 9 3 8 8 8c3 0 6-1 7-3" fill="none" stroke="#eee" stroke-width="3"/><path d="M2 22C6 14 14 4 21 2" stroke="#bbb" fill="none"/></svg></span>
      <span class="tk"><svg viewBox="0 0 24 24"><path d="M20 12a8 8 0 1 0-4 7M12 12a4 4 0 1 1 4 3M4 6c5-5 12-4 15-1" fill="none" stroke="#bbb" stroke-width="1.500"/></svg></span>
      <span class="tk"><svg viewBox="0 0 24 24"><path d="M5 13h15c0-6-3-9-8-9s-8 4-8 9 3 8 8 8c3 0 6-1 7-3" fill="none" stroke="#0a84e8" stroke-width="4"/></svg></span>
      <span class="tk"><svg viewBox="0 0 24 24"><path d="M5 13h15c0-6-3-9-8-9s-8 4-8 9 3 8 8 8c3 0 6-1 7-3" fill="none" stroke="#2a9cf0" stroke-width="3.500"/><path d="M1 22C5 14 14 3 23 3" stroke="#f0c030" stroke-width="1.500" fill="none"/></svg></span>
      <span class="tk"><svg viewBox="0 0 24 24"><path d="M2 5h8l2 2h10v14H2z" fill="#f4d070"/><path d="M2 10h20v11H2z" fill="#f8e090"/><path d="M9 14h6v7H9z" fill="#2a9cf0"/></svg></span>
      <span class="tk run"><svg viewBox="0 0 24 24"><circle cx="12" cy="12" r="10" fill="#8ad040"/><path d="M6 13h11c0-4-2-6-5-6s-5 2-5 5 2 6 5 6c2 0 4-1 5-2" fill="none" stroke="#fff" stroke-width="2"/></svg></span>
      <span class="tk run current"><svg viewBox="0 0 24 24"><rect x="1" y="1" width="22" height="22" rx="4" fill="#0a90f0"/><path d="M12 4v16M5 10h6" stroke="#fff" stroke-width="2.500" fill="none"/><circle cx="16" cy="10" r="3" fill="none" stroke="#fff" stroke-width="2"/></svg></span>
      <span class="tk run"><svg viewBox="0 0 24 24"><rect x="1" y="1" width="22" height="22" rx="2" fill="#f09020"/><path d="M5 5h12v14H5z" fill="#f8e0a8"/><path d="M7 9h8M7 12h8M7 15h5" stroke="#a06020"/></svg></span>
      <span class="tk run"><svg viewBox="0 0 24 24"><path d="M21 5c-8-5-17 0-17 9 0 9 11 9 14 3 2-5-3-8-7-5" fill="none" stroke="#1a90e8" stroke-width="4.500"/></svg></span>
    </div>
    <span class="link-label">链接</span>
    <span class="cpu"><span>43%</span><span>CPU使用</span></span>
    <div class="tray">
      <svg class="tr-up" viewBox="0 0 14 8"><path d="M1 7l6-6 6 6" stroke="#fff" fill="none" stroke-width="1.300"/></svg>
      <svg class="tr" viewBox="0 0 16 16"><circle cx="8" cy="8" r="7" fill="#e8e0e0"/><circle cx="5" cy="6" r="1" fill="#a02020"/><circle cx="10" cy="5" r="1" fill="#555"/><circle cx="8" cy="10" r="1" fill="#555"/></svg>
      <svg class="tr" viewBox="0 0 16 16"><path d="M2 5h10v8H2zM12 7h2v4h-2z" fill="none" stroke="#fff"/><path d="M3 6h5v6H3z" fill="#fff"/><path d="M3 1h2v3H3z" fill="#fff"/></svg>
      <svg class="tr" viewBox="0 0 16 16"><path d="M2 14a12 12 0 0 1 12-12M5 14a9 9 0 0 1 9-9M8 14a6 6 0 0 1 6-6M11 14a3 3 0 0 1 3-3" fill="none" stroke="#ccc"/></svg>
      <svg class="tr" viewBox="0 0 16 16"><path d="M1 6h3l4-4v12l-4-4H1z" fill="none" stroke="#fff"/><path d="M10 5c1 2 1 4 0 6M12 3c2 3 2 7 0 10" fill="none" stroke="#fff"/></svg>
      <svg class="tr-kb" viewBox="0 0 22 15"><rect x=".5" y=".5" width="21" height="14" fill="none" stroke="#fff"/><path d="M3 4h16M3 7h16M5 11h12" stroke="#fff" stroke-dasharray="1 1"/></svg>
      <span class="tr-lang">英</span>
      <span class="sg-small">S</span>
    </div>
    <span class="clock"><span>13:35</span><span>2018/7/2</span></span>
    <span class="notify"><svg viewBox="0 0 16 16"><path d="M1 1h14v11H5l-2 3v-3H1z" fill="#fff"/><path d="M3 4h10M3 7h10M3 10h7" stroke="#333"/></svg><b class="badge">1</b></span>
  </div>

  <div class="score"><span>63</span></div>
  <div class="ime">
    <span class="ime-s">S</span><span class="ime-en">英</span><span class="ime-dot">•,</span>
    <svg viewBox="0 0 16 16"><circle cx="8" cy="8" r="7" fill="none" stroke="#1a6ac0" stroke-width="1.500"/><circle cx="5.500" cy="6" r="1" fill="#1a6ac0"/><circle cx="10.500" cy="6" r="1" fill="#1a6ac0"/><path d="M5 10c1 2 5 2 6 0" stroke="#1a6ac0" fill="none"/></svg>
    <svg viewBox="0 0 16 16"><rect x="5" y="0" width="6" height="10" rx="3" fill="#1a6ac0"/><path d="M3 7c0 6 10 6 10 0M8 12v4" stroke="#1a6ac0" fill="none"/></svg>
    <svg viewBox="0 0 16 16"><rect x="0" y="2" width="16" height="12" rx="2" fill="#1a6ac0"/><path d="M2 5h12M2 8h12M4 11h8" stroke="#fff" stroke-dasharray="1 1"/></svg>
    <svg viewBox="0 0 16 16"><circle cx="6" cy="4" r="3" fill="#b0b8c0"/><path d="M1 14c0-6 10-6 10 0z" fill="#b0b8c0"/></svg>
    <svg viewBox="0 0 16 16"><path d="M5 1L1 4l2 3 1-1v9h8V6l1 1 2-3-4-3c-1 2-5 2-6 0z" fill="#1a6ac0"/></svg>
    <svg viewBox="0 0 16 16"><path d="M15 3l-3 3-2-2 3-3c-3-1-6 2-5 5L1 13l2 2 7-7c3 1 6-2 5-5z" fill="#1a6ac0"/></svg>
  </div>
</div>
</body>
</html>
```
FILE: styles.css
```css
* { box-sizing: border-box; }
html, body { margin: 0; padding: 0; height: 100%; }
body {
  font-family: "Noto Sans CJK SC", "Noto Sans", sans-serif;
  font-size: 12px;
  color: #111;
  background: #f0f0f0;
  overflow: hidden;
}
i { font-style: normal; }
b { font-weight: normal; }
.sprite { width: 0; height: 0; position: absolute; }
.app { position: relative; width: 1366px; height: 768px; display: flex; flex-direction: column; overflow: hidden; }

.titlebar { height: 23px; background: #fff; display: flex; align-items: center; padding-left: 3px; flex: none; }
.app-icon { width: 16px; height: 16px; margin-right: 4px; }
.title-text { line-height: 23px; white-space: nowrap; letter-spacing: .33px; }
.win-controls { margin-left: auto; display: flex; margin-right: 2px; }
.win-controls svg { width: 46px; height: 22px; }

.menubar { height: 31px; flex: none; display: flex; align-items: center; background: #f5f5f5; padding: 0 0 2px 6px; gap: 10.7px; white-space: nowrap; }
.menu-extra { display: flex; align-items: center; gap: 2px; margin-left: -2px; }
.menu-extra2 { display: flex; align-items: center; gap: 2px; }
.help-link { color: #0f6a74; margin-left: 31.5px; }
.account { display: flex; align-items: center; gap: 3px; margin-left: 30px; font-size: 12.5px; }
.bell { width: 14px; height: 18px; margin-left: -1px; }
.menu-chev { margin-left: auto; margin-right: 2px; position: relative; top: -7px; }
.ic { width: 16px; height: 16px; flex: none; }
.ic-lg { width: 18px; height: 18px; }

.caret { display: inline-block; width: 0; height: 0; border: 3px solid transparent; border-top: 4px solid #111; border-bottom: 0; flex: none; }
.chev { font-weight: bold; font-size: 13px; line-height: 1; font-family: "DejaVu Sans", sans-serif; flex: none; }
.push { margin-left: auto; margin-right: 4px; position: relative; top: -6px; }
.sep { display: block; width: 1px; height: 18px; background: #b8b8b8; flex: none; }
.sep-tight { margin: 0 -3px; }
.ti { display: inline-flex; align-items: center; gap: 3px; height: 24px; white-space: nowrap; flex: none; }
.ti.off { color: #909090; }
.ti.active { background: #dceaf7; outline: 1px solid #0a78d4; outline-offset: -1px; padding: 0 3px; gap: 4px; }
.grip { width: 2px; height: 14px; flex: none; background: repeating-linear-gradient(#999 0 2px, transparent 2px 4px); }
.ml2 { margin-left: 2px; }
.ml3 { margin-left: 3px; }
.ml4 { margin-left: 4px; }
.ml5 { margin-left: 5px; }
.ml7 { margin-left: 7px; }

.toolbar { display: flex; align-items: center; flex: none; }
.top-tools { height: 29px; margin-bottom: 1px; }
.tgroup { display: flex; align-items: center; height: 29px; background: #fafafa; padding-bottom: 3px; }
.file-tools { width: 151px; padding-left: 6px; gap: 5px; }
.file-tools .sep { margin: 0 4px 0 3px; height: 24px; }
.file-tools .chev { margin-left: 14px; position: relative; top: -6px; }
.main-tools { width: 546px; margin-left: 3px; padding-left: 3px; gap: 8px; }
.sigma { font-weight: bold; width: 12px; text-align: center; font-size: 14px; font-family: "DejaVu Sans", sans-serif; margin-left: 1px; margin-right: 4px; }
.view-tools { margin-left: 3px; flex: 1; padding-left: 4px; gap: 7px; }
.ti-white { background: #fff; padding-right: 2px; height: 26px; }

.workspace { position: relative; height: 622px; flex: none; display: flex; }

.nav-panel { width: 165px; flex: none; display: flex; flex-direction: column; margin-right: 5px; }
.panel-title { height: 15px; flex: none; background: #0058e0; color: #fff; font-size: 13px; line-height: 15px; display: flex; justify-content: space-between; align-items: center; }
.pin-close { display: flex; align-items: center; gap: 10px; padding-right: 4px; }
.pin { width: 6px; height: 9px; border: 1px solid #fff; border-width: 1px 2px 3px 1px; display: block; }
.close { font-size: 13px; line-height: 1; font-family: "DejaVu Sans", sans-serif; }
.nav-btn { height: 22px; margin: 1px 0 0 0; width: 165px; background: #f0f0f0; border: 1px solid #a8a8a8; text-align: center; line-height: 20px; flex: none; }
.tree-head { height: 26px; flex: none; margin: 1px 2px 0; background: #fff; padding: 4px 0 0 7px; width: 161px; }
.tree-head svg { width: 44px; height: 18px; display: block; }
.tree-box { width: 161px; margin-left: 2px; height: 488px; flex: none; position: relative; background: #fff; border: 1px solid #a0a0a0; overflow: hidden; display: flex; }
.tree { list-style: none; margin: 0; padding: 0; flex: 1; position: relative; background: repeating-linear-gradient(#777 0 1px, transparent 1px 2px) 14px 15px / 1px 100% no-repeat; }
.tree li { height: 16px; line-height: 16px; position: relative; white-space: nowrap; display: flex; align-items: center; }
.root { padding-left: 24px; gap: 4px; }
.root::before { content: ""; position: absolute; left: 11px; top: 4px; width: 6px; height: 6px; background: #fff; border-right: 2px solid #555; border-bottom: 2px solid #555; transform: rotate(45deg); }
.root.shut::before { border-color: #aaa; transform: rotate(-45deg); left: 9px; top: 5px; box-shadow: -3px 3px 0 4px #fff; }
.fd { width: 16px; height: 14px; flex: none; }
.leaf { padding-left: 44px; gap: 4px; }
.leaf::before { content: ""; position: absolute; left: 33px; top: 0; bottom: 0; width: 11px; background: repeating-linear-gradient(#777 0 1px, transparent 1px 2px) 0 0 / 1px 100% no-repeat, repeating-linear-gradient(90deg, #777 0 1px, transparent 1px 2px) 0 8px / 100% 1px no-repeat; }
.leaf.last::before { bottom: 7px; }
.ti-ic { width: 15px; height: 15px; flex: none; position: relative; }
.leaf.sel { background: linear-gradient(#d4d4d4, #d4d4d4) 42px 0 / 81px 100% no-repeat; }
.scroll { width: 15px; margin-right: 1px; flex: none; display: flex; flex-direction: column; background: #f0f0f0; height: 100%; position: relative; }
.sc-up, .sc-dn { height: 17px; text-align: center; font-size: 10px; line-height: 17px; color: #555; flex: none; font-weight: bold; }
.sc-thumb { height: 294px; background: #c4c4c4; flex: none; }
.sc-track { flex: 1; }

.center { width: 785px; flex: none; display: flex; flex-direction: column; margin-right: 3px; }
.draw-row { background: #fafafa; }
.row-edit { height: 27px; padding: 0 0 2px 4px; gap: 7px; margin-left: 2px; }
.row-edit .grip { margin-right: -4px; }
.row-select { height: 27px; padding: 0 0 1px 7px; gap: 5px; margin-left: 2px; }
.row-select .grip { margin: 0 3px; }
.row-draw { height: 27px; margin-top: 1px; padding: 0 0 2px 1px; gap: 5px; margin-left: 2px; }
.row-draw .grip:first-child { margin-right: -2px; }
.row-draw .grip:last-child { margin-left: 8px; }
.row-draw .chev { position: relative; top: -6px; margin-left: 10px; }
.row-draw .sep { margin: 0 1px; }
.row-draw > .caret-n { margin-left: -2px; }
.ti-point { gap: 6px; margin-right: 1px; }
.row-snap { height: 28px; margin-top: 2px; padding: 0 0 2px 4px; gap: 4px; margin-left: 2px; }
.ti-join { margin-left: -4px; }
.mm { margin-left: -2px; }
.combo { display: flex; align-items: center; justify-content: space-between; background: #fff; height: 24px; padding: 0 3px; flex: none; }
.c-floor { width: 57px; }
.c-type { width: 67px; margin-left: -3px; }
.c-sub { width: 65px; }
.c-name { width: 64px; margin-left: 2px; }
.c-off { width: 56px; margin-right: 2px; }
.row-select .sep { margin: 0 2px 0 1px; }
.tgap { width: 4px; flex: none; background: #f0f0f0; height: 28px; }
.tgap-sm { width: 1px; }
.caret-w { margin-left: 3px; }
.caret-n { margin-left: 1px; }
.canvas { display: block; width: 785px; height: 509px; flex: none; }
.wall { fill: #f0f000; }
.rebar { fill: #0000a0; stroke: #fff; stroke-width: 1; }
.gl { stroke: #008000; stroke-width: 1; fill: none; }
.rl { stroke: #ff0000; stroke-width: 1; fill: none; }
.oct use { fill: none; stroke: #008000; stroke-width: 1; }
.lab text { fill: #d8d8d8; font-family: "Liberation Sans", sans-serif; font-size: 15px; text-anchor: middle; }
.lab .cn { font-size: 14px; }
.mute { color: #888; flex: none; }
.spin { width: 58px; height: 22px; border: 1px solid #888; background: #f4f4f4; display: flex; align-items: center; justify-content: flex-end; gap: 6px; padding-right: 2px; color: #777; flex: none; font-size: 13px; }
.spin-arrows { font-size: 7px; line-height: 8px; color: #666; text-align: center; width: 10px; }

.prop-panel { flex: 1; display: flex; flex-direction: column; min-width: 0; }
.prop-panel .panel-title { margin-right: 1px; }
.prop-body { flex: 1; background: #fff; border: 1px solid #a8a8a8; padding: 1px 3px 0 1px; margin-top: 1px; }
.grid { border-collapse: collapse; table-layout: fixed; width: 402px; }
.grid th, .grid td { border: 1px solid #c4c4c4; padding: 0; height: 19px; line-height: 17px; white-space: nowrap; overflow: hidden; position: relative; }
.grid thead th { height: 22px; font-weight: normal; }
.grid .n { width: 20px; text-align: center; background: linear-gradient(#fafafa, #ececec); }
.grid .k { width: 121px; padding-left: 20px; background-color: #fff; }
.grid th.k { padding-left: 0; text-align: center; background: linear-gradient(#fcfcfc, #ececec); }
.grid th.v { text-align: center; color: #5a0a6a; background: linear-gradient(#fbdca0, #f0bf60); }
.grid .v { padding-left: 2px; }
.link { color: #0000e0; }
.dim { color: #888; }
.bar-sym { color: #333; margin: 0 1px; }
.grp { padding-left: 20px; }
.grid .grp .pm { position: absolute; left: 3px; top: 3px; width: 12px; height: 12px; border: 1px solid #aaa; color: #111; line-height: 10px; text-align: center; }
.grid .sub { padding-left: 31px; }
.grid .sub::before { content: ""; position: absolute; left: 9px; top: -1px; bottom: -1px; width: 1px; background: #b8b8b8; }
.grid .sub::after { content: ""; position: absolute; left: 10px; top: 9px; width: 16px; height: 1px; background: #b8b8b8; }
.grid .end::before { bottom: 9px; }
.cur .n { background: #ffd68f; color: #5a0a6a; }
.grid .cur .k { background: #0078d7; color: #fff; }
.cur .v { background: #d8e8f7; }
.cur .sub::before, .cur .sub::after { background: #d8e8f7; }

.callout { position: absolute; left: 909px; top: 270px; width: 312px; height: 61px; border: 7px solid #ff0000; pointer-events: none; }

.statusbar { height: 18px; margin-top: 2px; flex: none; display: flex; gap: 3px; }
.st { background: #f7f7f7; border: 1px solid #ddd; line-height: 16px; padding-left: 1px; white-space: nowrap; overflow: hidden; flex: none; }
.mono { font-family: "Liberation Mono", monospace; font-size: 10px; }
.st-xy { width: 147px; }
.st-h { width: 77px; }
.st-b { width: 97px; }
.st-c { width: 47px; }
.st-msg { flex: 1; }
.st-fps { width: 70px; margin-left: -2px; }

.taskbar { height: 40px; margin-top: 2px; flex: none; position: relative; display: flex; align-items: center; color: #fff; overflow: hidden; background: #0c0c0c; }
.ghost { position: absolute; left: 0; width: 1312px; top: 0; height: 16px; background: #232323; color: #46505e; font-size: 12px; white-space: nowrap; overflow: hidden; }
.g1, .g2 { position: absolute; top: -9px; line-height: 18px; }
.g1 { left: 404px; }
.g2 { left: 1086px; }
.start { width: 48px; height: 40px; background: #000; display: flex; align-items: center; justify-content: center; flex: none; position: relative; }
.win-logo { width: 16px; height: 16px; }
.search { width: 344px; height: 40px; background: #333; flex: none; display: flex; align-items: center; padding-left: 10px; color: #8a8a8a; font-size: 14px; position: relative; }
.cortana { width: 20px; height: 20px; border: 3px solid #ddd; border-radius: 50%; margin-right: 6px; flex: none; }
.mic { width: 12px; height: 18px; margin-left: auto; margin-right: 15px; }
.tasks { display: grid; grid-template-columns: 51px 52px 48px 52px 44px 46px 47px 44px 44px 46px 44px; align-items: center; height: 40px; position: relative; flex: none; margin-left: 1px; }
.tk { width: 44px; height: 40px; display: flex; align-items: center; justify-content: center; position: relative; }
.tk svg { width: 26px; height: 26px; }
.tk:first-child svg { width: 22px; height: 20px; }
.run::after { content: ""; position: absolute; left: 3px; right: 5px; bottom: 0; height: 2px; background: #76b9ed; }
.current { background: #3c3c3c; }
.current::after { left: 0; right: 0; }
.link-label { font-size: 12px; margin-left: 11px; color: #ddd; width: 30px; flex: none; position: relative; }
.cpu { display: flex; flex-direction: column; align-items: center; line-height: 18px; margin-left: 14px; width: 52px; font-size: 12px; flex: none; position: relative; color: #ddd; }
.tray { display: flex; align-items: center; gap: 8px; margin-left: 16px; flex: none; position: relative; }
.tr-up { width: 14px; height: 8px; margin-right: 2px; }
.tr { width: 16px; height: 16px; }
.tr-kb { width: 22px; height: 15px; }
.tr-lang { font-size: 13px; margin-left: 2px; }
.sg-small { width: 16px; height: 16px; background: #e8481c; border-radius: 3px; transform: rotate(-10deg); text-align: center; line-height: 16px; font-weight: bold; margin-left: 6px; }
.clock { display: flex; flex-direction: column; align-items: center; width: 62px; line-height: 20px; margin-left: 15px; flex: none; position: relative; font-size: 12px; color: #ddd; }
.notify { position: relative; margin-left: 18px; width: 18px; height: 18px; flex: none; }
.notify svg { width: 16px; height: 16px; }
.badge { position: absolute; left: 6px; top: 6px; width: 16px; height: 16px; border-radius: 50%; background: #444; border: 1px solid #888; color: #fff; text-align: center; line-height: 14px; font-size: 11px; font-weight: bold; }

.score { position: absolute; left: 1008px; top: -28px; width: 47px; height: 47px; border-radius: 50%; background: #2fa84a; border: 2px solid #cfe8d4; box-shadow: 0 2px 4px rgba(0,0,0,.4); color: #fff; font-weight: bold; font-size: 12px; display: flex; align-items: flex-end; justify-content: center; padding-bottom: 2px; }
.ime { position: absolute; left: 750px; top: 14px; width: 194px; height: 24px; background: #f6f8fb; border: 1px solid #a8c0d8; display: flex; align-items: center; gap: 6.5px; padding-left: 19px; }
.ime svg { width: 16px; height: 16px; flex: none; }
.ime-s { position: absolute; left: -14px; top: -4px; width: 28px; height: 28px; background: #e8481c; color: #fff; border-radius: 6px; transform: rotate(-10deg); font-weight: bold; font-size: 20px; line-height: 28px; text-align: center; }
.ime-en { color: #1a6ac0; font-weight: bold; font-size: 14px; }
.ime-dot { color: #1a6ac0; font-weight: bold; width: 14px; margin-right: 2px; text-align: center; }
```
